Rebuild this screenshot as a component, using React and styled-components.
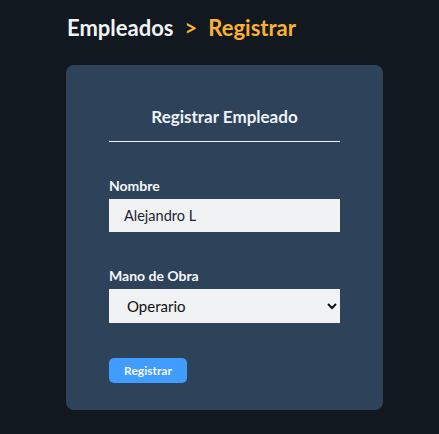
import React from 'react';
import styled, { createGlobalStyle } from 'styled-components';

const GlobalStyle = createGlobalStyle`
  html, body {
    margin: 0;
    padding: 0;
    background: #111820;
    font-family: 'Lato', 'Noto Sans', sans-serif;
  }
  * { box-sizing: border-box; }
`;

const Page = styled.div`
  min-height: 434px;
  padding: 13px 0 0 66px;
`;

const Breadcrumb = styled.h1`
  margin: 0;
  height: 30px;
  font-size: 22px;
  line-height: 30px;
  font-weight: 700;
  color: #f1f3f6;
  display: flex;
  gap: 11px;
  padding-left: 1px;
`;

const Current = styled.span`
  color: #fbb034;
`;

const Card = styled.form`
  margin-top: 22px;
  width: 317px;
  background: #2e435a;
  border-radius: 8px;
  padding: 42px 43px 27px;
  display: flex;
  flex-direction: column;
`;

const Title = styled.h2`
  margin: 0;
  font-size: 17px;
  line-height: 20px;
  font-weight: 700;
  color: #eef1f5;
  text-align: center;
  padding-bottom: 14px;
  border-bottom: 1px solid #f2f2f2;
`;

const Field = styled.div`
  display: flex;
  flex-direction: column;
  gap: 4px;
  margin-top: 35px;
`;

const Label = styled.label`
  font-size: 14px;
  line-height: 18px;
  font-weight: 700;
  color: #f4f6f8;
`;

const Input = styled.input`
  height: 33px;
  border: none;
  outline: none;
  background: #f0f2f4;
  padding: 0 15px;
  font-family: inherit;
  font-size: 14.5px;
  color: #1a2532;
  caret-color: #000;
`;

const Select = styled.select`
  height: 34px;
  border: none;
  outline: none;
  background: #f0f2f4;
  padding: 0 14px;
  font-family: inherit;
  font-size: 15px;
  color: #111;
`;

const Button = styled.button`
  margin-top: 35px;
  align-self: flex-start;
  width: 78px;
  height: 25px;
  border: none;
  border-radius: 5px;
  background: #409cff;
  color: #f4f8ff;
  font-family: inherit;
  font-size: 12px;
  font-weight: 700;
`;

export default function App() {
  return (
    <Page>
      <GlobalStyle />
      <Breadcrumb>
        <span>Empleados</span>
        <Current>&gt;</Current>
        <Current>Registrar</Current>
      </Breadcrumb>
      <Card onSubmit={e => e.preventDefault()}>
        <Title>Registrar Empleado</Title>
        <Field>
          <Label htmlFor="nombre">Nombre</Label>
          <Input id="nombre" defaultValue="Alejandro L" autoFocus />
        </Field>
        <Field>
          <Label htmlFor="mano">Mano de Obra</Label>
          <Select id="mano" defaultValue="operario">
            <option value="operario">Operario</option>
            <option value="tecnico">Técnico</option>
            <option value="supervisor">Supervisor</option>
          </Select>
        </Field>
        <Button type="submit">Registrar</Button>
      </Card>
    </Page>
  );
}
